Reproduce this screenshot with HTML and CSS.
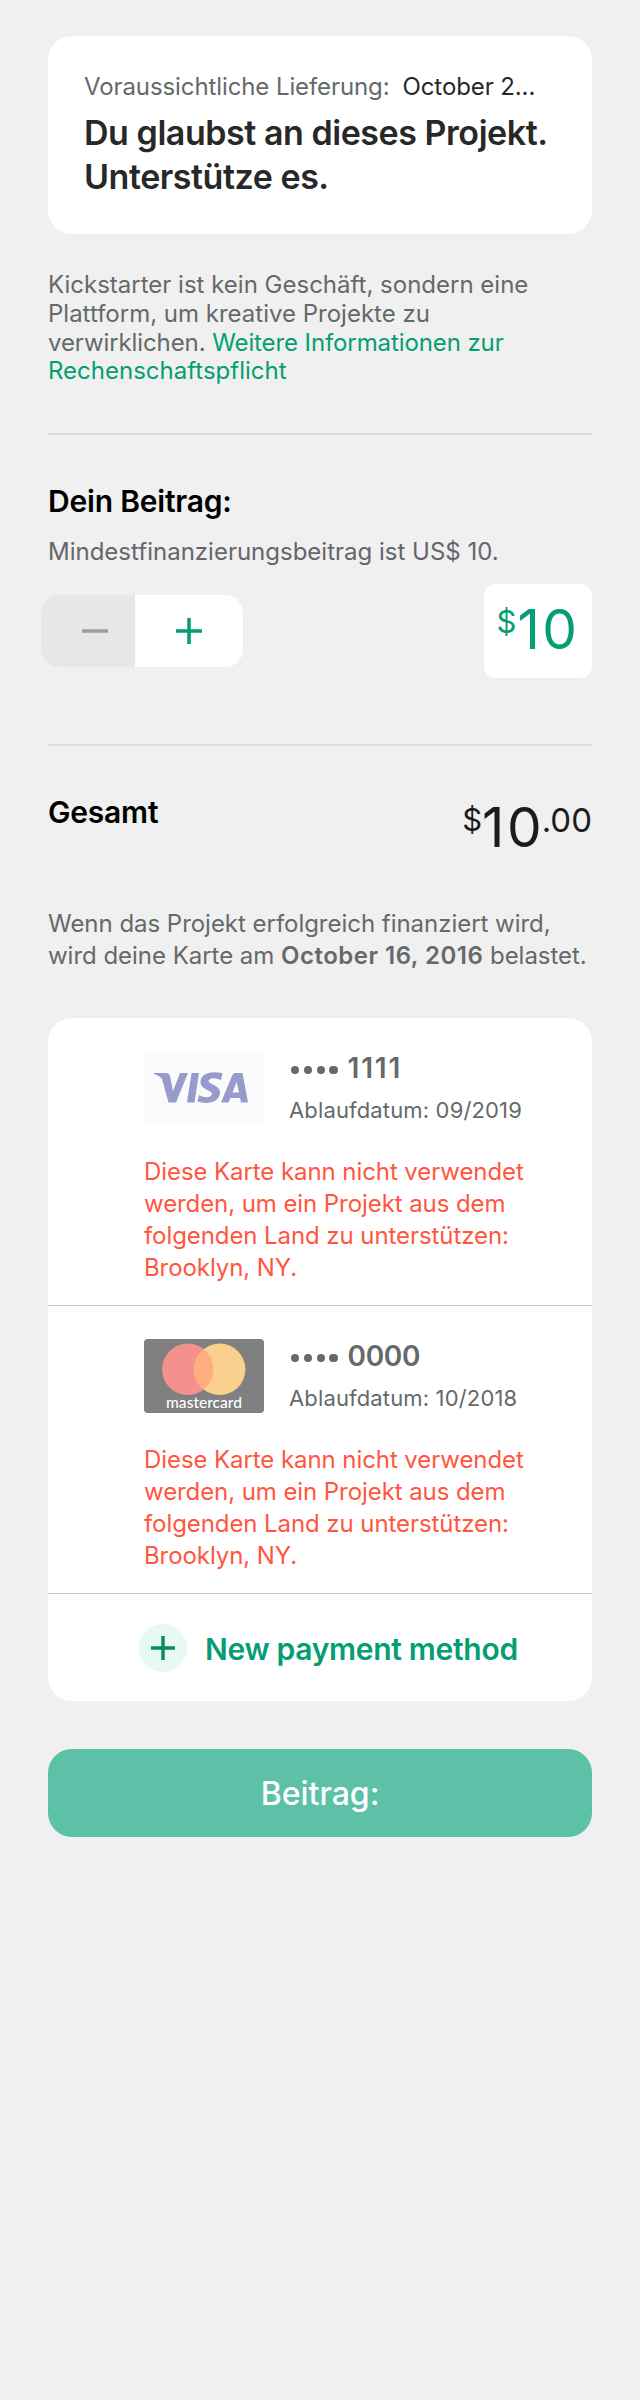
FILE: index.html
```html
<!DOCTYPE html>
<html lang="de">
<head>
<meta charset="utf-8">
<title>Beitrag</title>
<link rel="stylesheet" href="styles.css">
</head>
<body>
<main class="page">
  <section class="reward">
    <p class="delivery"><span class="delivery-label">Voraussichtliche Lieferung:</span><span class="delivery-date">October 2...</span></p>
    <h1 class="reward-title">Du glaubst an dieses Projekt.<br>Unterstütze es.</h1>
  </section>
  <p class="notice">Kickstarter ist kein Geschäft, sondern eine<br>Plattform, um kreative Projekte zu<br><span class="tight">verwirklichen. <a class="link">Weitere Informationen zur</a></span><br><a class="link">Rechenschaftspflicht</a></p>
  <hr class="rule">
  <section class="pledge">
    <h2 class="heading">Dein Beitrag:</h2>
    <p class="minimum">Mindestfinanzierungsbeitrag ist US$ 10.</p>
    <div class="pledge-row">
      <div class="stepper">
        <div class="step step-minus"><svg width="26" height="26" viewBox="0 0 26 26"><path d="M0 13H26" stroke="#9a9f9f" stroke-width="3.6"/></svg></div>
        <div class="step step-plus"><svg width="26" height="26" viewBox="0 0 26 26"><path d="M0 13H26M13 0V26" stroke="#059e74" stroke-width="3.6"/></svg></div>
      </div>
      <div class="amount amount-box"><span class="currency">$</span><span class="whole">10</span></div>
    </div>
  </section>
  <hr class="rule">
  <section class="total">
    <h2 class="heading">Gesamt</h2>
    <div class="amount"><span class="currency">$</span><span class="whole">10</span><span class="cents">.00</span></div>
  </section>
  <p class="charge">Wenn das Projekt erfolgreich finanziert wird,<br>wird deine Karte am <b>October 16, 2016</b> belastet.</p>
  <section class="methods">
    <article class="method">
      <div class="method-top">
        <svg class="logo" viewBox="0 0 120 74"><rect width="120" height="74" rx="4" fill="#fbfbfc"/>
          <g fill="#969bcb"><path d="M10 22H22Q25 22 26 25L29 40L36 22H44L32 51.500H24.500L18 28Q15.500 24.500 10 23Z"/><path d="M47.500 22H55L50.500 51.500H43Z"/><path d="M78.500 22.500L77 29Q67 25.500 64.500 29.500C64 33.500 76.500 34 76 42C75.500 51 63.500 54 53.500 50.500L55 44C61 47.500 68 46.500 68 43C68 39 56 38.500 56.500 30.500C57 22 69 19.500 78.500 22.500Z"/><path fill-rule="evenodd" d="M91 22H98.500L104 51.500H97L96 47H86.500L84.500 51.500H77L88 25Q89 22 91 22ZM92.500 31L88.500 41.500H95Z"/></g></svg>
        <div class="method-info"><p class="number"><span class="dots"><i></i><i></i><i></i><i></i></span><span class="digits digits-ones">1111</span></p><p class="expiry">Ablaufdatum: 09/2019</p></div>
      </div>
      <p class="error">Diese Karte kann nicht verwendet<br>werden, um ein Projekt aus dem<br>folgenden Land zu unterstützen:<br>Brooklyn, NY.</p>
    </article>
    <article class="method">
      <div class="method-top">
        <svg class="logo" viewBox="0 0 120 74"><rect width="120" height="74" rx="4" fill="#808080"/><circle cx="43.800" cy="30.300" r="25.700" fill="#f5918d"/><circle cx="75.700" cy="30.300" r="25.700" fill="#fbcf8e"/><path d="M59.750 10.150A25.700 25.700 0 0 1 59.750 50.450A25.700 25.700 0 0 1 59.750 10.150Z" fill="#ffae7f"/><text class="logo-word" x="22" y="69" textLength="76" lengthAdjust="spacingAndGlyphs">mastercard</text></svg>
        <div class="method-info"><p class="number"><span class="dots"><i></i><i></i><i></i><i></i></span><span class="digits">0000</span></p><p class="expiry">Ablaufdatum: 10/2018</p></div>
      </div>
      <p class="error">Diese Karte kann nicht verwendet<br>werden, um ein Projekt aus dem<br>folgenden Land zu unterstützen:<br>Brooklyn, NY.</p>
    </article>
    <div class="add"><svg width="48" height="48" viewBox="0 0 48 48"><circle cx="24" cy="24" r="24" fill="#e6faf1"/><path d="M12 24H36M24 12V36" stroke="#0a8a5f" stroke-width="3.400"/></svg><span class="add-label">New payment method</span></div>
  </section>
  <button class="submit">Beitrag:</button>
</main>
</body>
</html>
```
FILE: styles.css
```css
* { box-sizing: border-box; }
body { margin: 0; background: #f0f0f0; font-family: Inter, "Liberation Sans", sans-serif; }
p, h1, h2 { margin: 0; }
.page { padding: 36px 48px 0; display: flex; flex-direction: column; white-space: nowrap; }

.reward { height: 198px; border-radius: 24px; background: #fff; padding: 35px 36px 0; }
.delivery { display: flex; font-size: 24px; line-height: 32px; letter-spacing: -0.1px; color: #656969; }
.delivery-date { margin-left: 13px; color: #282828; }
.reward-title { margin-top: 8px; font-size: 34px; line-height: 44px; font-weight: 600; letter-spacing: -0.45px; color: #282828; }

.notice { margin-top: 37px; font-size: 24px; line-height: 28.750px; color: #656969; }
.tight { letter-spacing: -0.1px; }
.link { color: #059e74; }
.rule { width: 100%; height: 2px; margin: 0; border: 0; background: #dcdcdc; }
.notice + .rule { margin-top: 47px; }

.heading { font-size: 30px; line-height: 36px; font-weight: 600; letter-spacing: -0.2px; color: #000; }
.pledge { padding-top: 48px; height: 309px; }
.minimum { margin-top: 19px; font-size: 24px; line-height: 28px; color: #65656a; }
.pledge-row { margin: 18px 0 0 -7px; display: flex; justify-content: space-between; align-items: center; height: 94px; }
.stepper { display: flex; width: 202px; height: 72px; border-radius: 18px; overflow: hidden; background: #fff; }
.step { display: flex; align-items: center; }
.step-minus { width: 94px; padding-left: 41px; background: #e7e7e7; }
.step-plus { width: 108px; justify-content: center; }

.amount { display: flex; line-height: 56px; color: #1c1c1c; }
.currency { margin-top: 1px; font-size: 31px; line-height: 40px; }
.cents { font-size: 33px; line-height: 42px; }
.whole { margin-right: -2.5px; font-size: 55px; letter-spacing: 2.5px; }
.amount-box { width: 108px; height: 94px; border-radius: 12px; background: #fff; color: #059e74; justify-content: flex-end; gap: 1px; padding: 17px 15px 0 0; }

.total { display: flex; justify-content: space-between; padding-top: 48px; height: 162px; }
.total .amount { padding-top: 5px; }
.charge { font-size: 24px; line-height: 32px; letter-spacing: -0.03px; color: #656969; }
.charge b { font-weight: 600; letter-spacing: 0.5px; }

.methods { margin-top: 46px; height: 683px; border-radius: 24px; background: #fff; }
.method { height: 288px; border-bottom: 1px solid #c6c6c6; padding: 33px 0 0 96px; }
.method-top { display: flex; gap: 25px; height: 74px; }
.logo { width: 120px; height: 74px; }
.logo-word { font: 500 16px Lato, sans-serif; fill: #fff; }
.number { display: flex; font-size: 28px; line-height: 34px; font-weight: 600; color: #656969; }
.dots { display: flex; gap: 4.600px; align-items: center; padding: 4px 0 0 2px; margin-right: 10px; }
.dots i { width: 8.200px; height: 8.200px; border-radius: 50%; background: #656969; }
.digits { letter-spacing: -0.3px; }
.digits-ones { letter-spacing: 1.8px; }
.expiry { margin-top: 11px; font-size: 22px; line-height: 28px; letter-spacing: 0.15px; color: #656969; }
.error { margin-top: 31px; font-size: 24px; line-height: 32px; letter-spacing: -0.08px; color: #ff5640; }
.add { display: flex; height: 107px; align-items: center; gap: 18px; padding-left: 91px; color: #059e74; font-size: 30px; font-weight: 600; letter-spacing: -0.3px; }
.add-label { padding-top: 3px; }

.submit { margin-top: 48px; height: 88px; border: 0; border-radius: 24px; background: #5dc1a8; color: #fff; font: 500 32px Inter, sans-serif; }
```
